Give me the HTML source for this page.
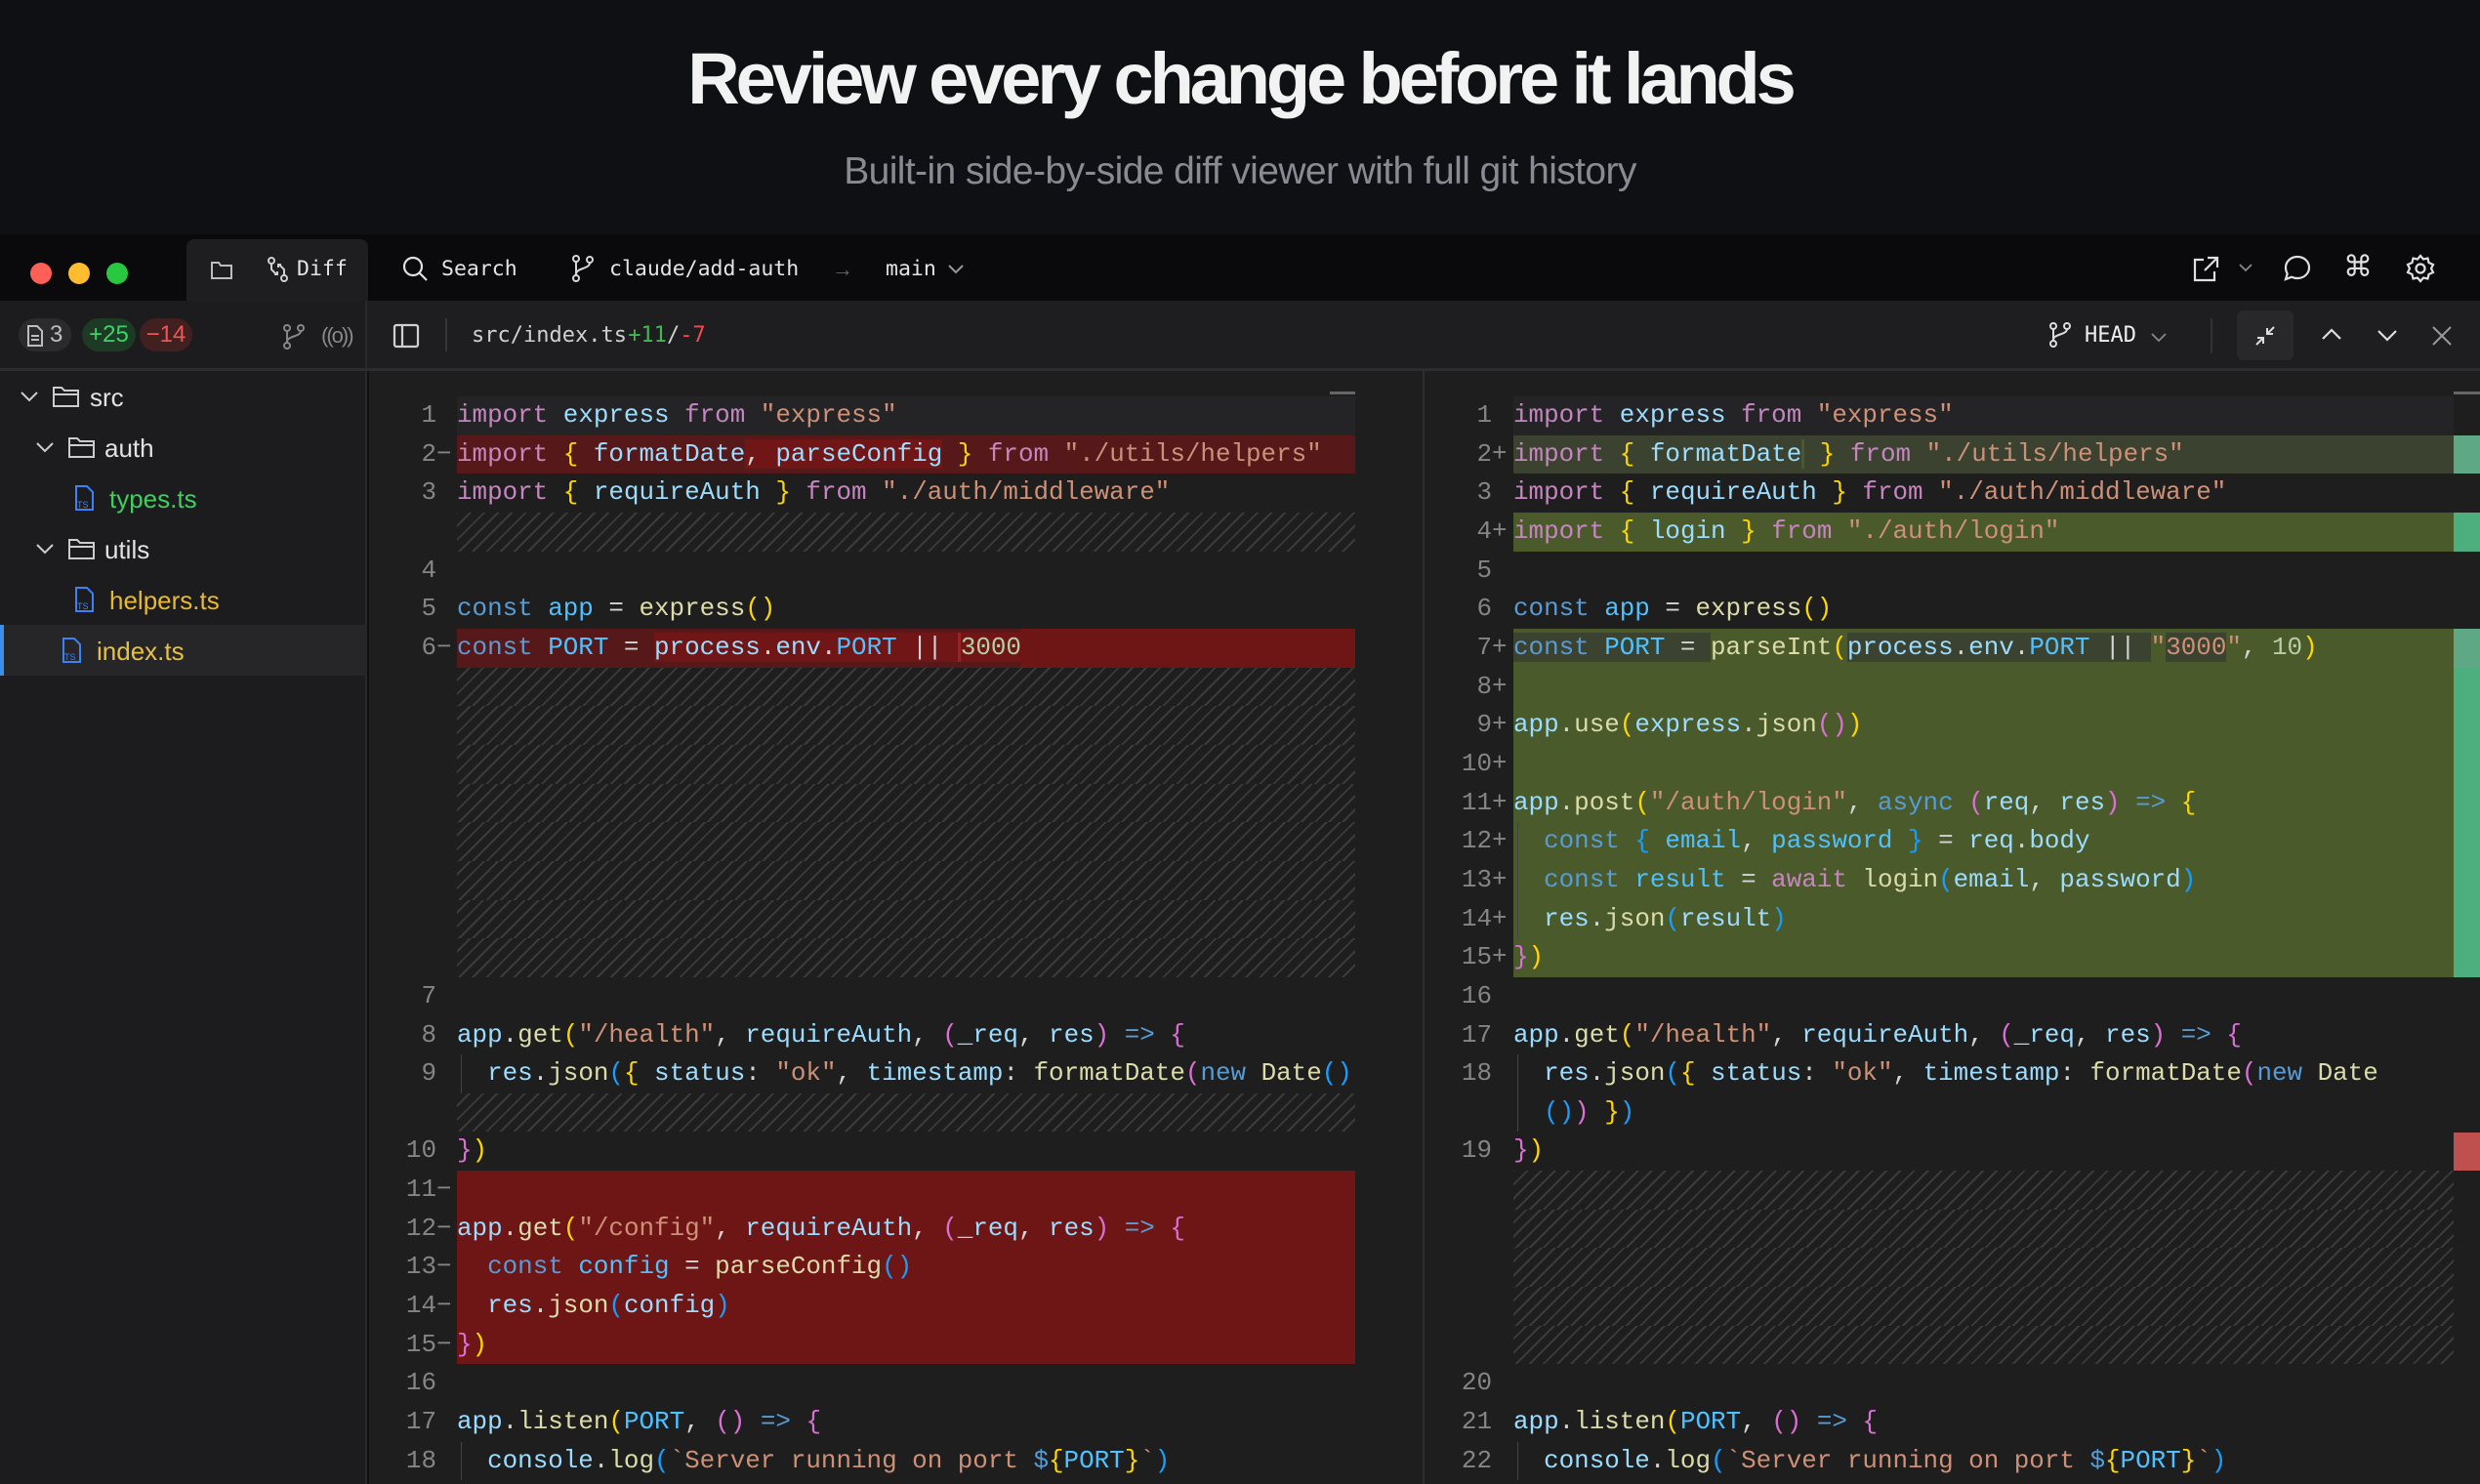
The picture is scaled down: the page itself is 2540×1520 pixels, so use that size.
<!DOCTYPE html>
<html><head><meta charset="utf-8">
<style>
*{margin:0;padding:0;box-sizing:border-box}
body{width:2540px;height:1520px;overflow:hidden;background:#0f1014;position:relative;font-family:"Liberation Sans",sans-serif}
.abs{position:absolute}
.title{position:absolute;left:0;width:2540px;top:44px;text-align:center;font-weight:bold;font-size:74px;line-height:74px;letter-spacing:-4.1px;color:#f2f2f2}
.sub{position:absolute;left:0;width:2540px;top:156px;text-align:center;font-size:39px;line-height:39px;color:#8a8a93;letter-spacing:-0.6px}
.tb{position:absolute;left:0;top:240px;width:2540px;height:68px;background:#0a0a0c}
.mono{font-family:"DejaVu Sans Mono","Liberation Mono",monospace}
.tbt{position:absolute;top:262px;font-size:21.5px;line-height:28px;color:#e4e4e4}
.side{position:absolute;left:0;top:308px;width:376px;height:1212px;background:#1c1c1f;border-right:2px solid #29292c}
.dh{position:absolute;left:376px;top:308px;width:2164px;height:71px;background:#1e1e21}
.hl{position:absolute;top:377px;left:0;width:2540px;height:3px;background:#2c2c2f}
.pill{position:absolute;top:326px;height:34px;border-radius:17px;font-size:24px;line-height:34px}
.tree{position:absolute;font-size:26px;line-height:52px;color:#e2e2e2;height:52px}
.main{position:absolute;left:378px;top:380px;width:2162px;height:1140px;background:#1e1e1e}
.pane{position:absolute;top:406px}
.row{position:relative;height:39.66px}
.ln{position:absolute;top:0;text-align:right;color:#858585}
.mk{position:absolute;top:0;color:#858585}
.code{position:absolute;top:0;height:39.66px;white-space:pre;color:#d4d4d4;overflow:hidden}
.pane,.row{font-family:"Liberation Mono",monospace;font-size:25.9px;line-height:39.66px}
.L .ln{left:0;width:71px}.L .mk{left:71px;width:21px}.L .code{left:92px;width:920px}
.R .ln{left:0;width:70px}.R .mk{left:70px;width:22px}.R .code{left:92px;width:963px}
.cur{background:#242426}
.hatch{background:repeating-linear-gradient(-45deg,#1e1e1e 0 8px,#3b3b3d 8px 10px)}
.rb{background:#561818}.rx{background:#6e1515}.rs{background:#711616}
.gb{background:#3b4230}.gx{background:#4b5a2a}.gs{background:#4b5a2a}
.ig{position:absolute;left:4px;top:0;width:1px;height:39.66px;background:#444}
.k{color:#c586c0}.kw{color:#569cd6}.v{color:#9cdcfe}.c{color:#4fc1ff}.f{color:#dcdcaa}.s{color:#ce9178}.n{color:#b5cea8}
.b1{color:#ffd700}.b2{color:#da70d6}.b3{color:#179fff}
.mm{position:absolute;left:2513px;width:27px;height:39.66px}
</style></head><body>
<div class="title">Review every change before it lands</div>
<div class="sub">Built-in side-by-side diff viewer with full git history</div>

<div class="tb"></div>
<svg class="abs" style="left:0;top:240px" width="160" height="68"><circle cx="42" cy="40" r="11" fill="#fe5f57"/><circle cx="81" cy="40" r="11" fill="#febc2e"/><circle cx="120" cy="40" r="11" fill="#28c840"/></svg>
<div class="abs" style="left:191px;top:245px;width:186px;height:66px;background:#1e1e21;border-radius:8px 8px 0 0"></div>
<svg class="abs" style="left:214px;top:264px" width="26" height="24" fill="none" stroke="#bdbdbd" stroke-width="2"><path d="M3 5h7l2 3h11v13H3z"/></svg>
<svg class="abs" style="left:272px;top:262px" width="26" height="28" fill="none" stroke="#d0d0d0" stroke-width="2"><circle cx="6" cy="5" r="3"/><circle cx="19" cy="23" r="3"/><path d="M6 8v6l5 5M19 20v-6l-5-5M9 19h3v-3M16 9h-3v3"/></svg>
<div class="tbt mono" style="left:304px">Diff</div>
<svg class="abs" style="left:410px;top:261px" width="30" height="30" fill="none" stroke="#e0e0e0" stroke-width="2.2"><circle cx="13" cy="12" r="9"/><path d="M20 19l7 7"/></svg>
<div class="tbt mono" style="left:452px">Search</div>
<svg class="abs" style="left:584px;top:260px" width="26" height="30" fill="none" stroke="#d8d8d8" stroke-width="2"><circle cx="6" cy="5" r="3"/><circle cx="6" cy="25" r="3"/><circle cx="20" cy="6" r="3"/><path d="M6 8v14M20 9c0 7-14 5-14 12"/></svg>
<div class="tbt mono" style="left:624px">claude/add-auth</div>
<div class="tbt" style="left:852px;color:#666;font-size:22px">→</div>
<div class="tbt mono" style="left:907px">main</div>
<svg class="abs" style="left:970px;top:268px" width="18" height="14" fill="none" stroke="#999" stroke-width="2"><path d="M2 4l7 7 7-7"/></svg>

<svg class="abs" style="left:2244px;top:260px" width="30" height="30" fill="none" stroke="#e0e0e0" stroke-width="2.2"><path d="M13 6H4v21h20v-9M17 4h10v10M27 4L14 17"/></svg>
<svg class="abs" style="left:2292px;top:268px" width="16" height="12" fill="none" stroke="#888" stroke-width="1.8"><path d="M2 3l6 6 6-6"/></svg>
<svg class="abs" style="left:2337px;top:259px" width="32" height="32" fill="none" stroke="#e0e0e0" stroke-width="2.2"><path d="M16 4c7 0 12 5 12 11s-5 11-12 11c-2 0-4-.4-6-1.3L4 27l1.7-5.6C4.6 19.6 4 17.4 4 15 4 9 9 4 16 4z"/></svg>
<div class="abs" style="left:2400px;top:258px;font-size:30px;line-height:32px;color:#e0e0e0;font-family:'DejaVu Sans',sans-serif">⌘</div>
<svg class="abs" style="left:2463px;top:259px" width="32" height="32" fill="none" stroke="#e0e0e0" stroke-width="2.2"><circle cx="16" cy="16" r="4.5"/><path d="M16 3l3 3.5 4.5-1 1 4.5L29 12l-2 4 2 4-4.5 2-1 4.5-4.5-1L16 29l-3-3.5-4.5 1-1-4.5L3 20l2-4-2-4 4.5-2 1-4.5 4.5 1z"/></svg>

<div class="side"></div>
<div class="dh"></div>
<div class="hl"></div>
<div class="pill" style="left:19px;width:54px;background:#2b2b2e;color:#bdbdbd;padding-left:32px">3</div>
<svg class="abs" style="left:27px;top:333px" width="18" height="22" fill="none" stroke="#bdbdbd" stroke-width="2"><path d="M2 1h9l5 5v15H2z M5 11h8M5 15h8"/></svg>
<div class="pill" style="left:84px;width:55px;background:#1d3a25;color:#3fd068;text-align:center">+25</div>
<div class="pill" style="left:143px;width:54px;background:#41201f;color:#f05656;text-align:center">−14</div>
<svg class="abs" style="left:289px;top:332px" width="24" height="26" fill="none" stroke="#888" stroke-width="2"><circle cx="5" cy="4" r="3"/><circle cx="5" cy="22" r="3"/><circle cx="19" cy="4" r="3"/><path d="M5 7v12M19 7c0 6-14 5-14 11"/></svg>
<div class="abs" style="left:329px;top:329px;font-size:22px;line-height:30px;color:#888;letter-spacing:-2px">((o))</div>

<svg class="abs" style="left:402px;top:331px" width="28" height="26" fill="none" stroke="#d0d0d0" stroke-width="2.2"><rect x="2" y="2" width="24" height="22" rx="2"/><path d="M10 2v22"/></svg>
<div class="abs" style="left:456px;top:326px;width:2px;height:34px;background:#363638"></div>
<div class="abs mono" style="left:483px;top:329px;font-size:22px;line-height:30px;color:#d0d0d0">src/index.ts <span style="color:#3fb950;margin-left:-12px">+11</span>/<span style="color:#f14c4c">-7</span></div>
<svg class="abs" style="left:2098px;top:330px" width="24" height="26" fill="none" stroke="#ddd" stroke-width="2"><circle cx="5" cy="4" r="3"/><circle cx="5" cy="22" r="3"/><circle cx="19" cy="4" r="3"/><path d="M5 7v12M19 7c0 6-14 5-14 11"/></svg>
<div class="abs mono" style="left:2135px;top:329px;font-size:22px;line-height:30px;color:#eee">HEAD</div>
<svg class="abs" style="left:2202px;top:339px" width="18" height="12" fill="none" stroke="#888" stroke-width="1.8"><path d="M2 3l7 7 7-7"/></svg>
<div class="abs" style="left:2264px;top:326px;width:2px;height:36px;background:#333"></div>
<div class="abs" style="left:2291px;top:318px;width:58px;height:51px;background:#28282b;border-radius:6px"></div>
<svg class="abs" style="left:2308px;top:332px" width="24" height="24" fill="none" stroke="#ddd" stroke-width="2"><path d="M3 21l7-7M4 14h6v6M21 3l-7 7M14 4v6h6"/></svg>
<svg class="abs" style="left:2376px;top:334px" width="24" height="16" fill="none" stroke="#ddd" stroke-width="2.2"><path d="M3 13l9-9 9 9"/></svg>
<svg class="abs" style="left:2433px;top:336px" width="24" height="16" fill="none" stroke="#ddd" stroke-width="2.2"><path d="M3 3l9 9 9-9"/></svg>
<svg class="abs" style="left:2489px;top:332px" width="24" height="24" fill="none" stroke="#999" stroke-width="2"><path d="M3 3l18 18M21 3L3 21"/></svg>

<!-- tree -->
<svg class="abs" style="left:20px;top:398px" width="20" height="16" fill="none" stroke="#ccc" stroke-width="2"><path d="M2 4l8 8 8-8"/></svg>
<svg class="abs" style="left:53px;top:393px" width="30" height="26" fill="none" stroke="#ccc" stroke-width="2"><path d="M2 4h8l3 3h14v16H2z M2 11h25"/></svg>
<div class="tree" style="left:92px;top:381px">src</div>
<svg class="abs" style="left:36px;top:450px" width="20" height="16" fill="none" stroke="#ccc" stroke-width="2"><path d="M2 4l8 8 8-8"/></svg>
<svg class="abs" style="left:69px;top:445px" width="30" height="26" fill="none" stroke="#ccc" stroke-width="2"><path d="M2 4h8l3 3h14v16H2z M2 11h25"/></svg>
<div class="tree" style="left:107px;top:433px">auth</div>
<svg class="abs" style="left:75px;top:496px" width="24" height="28" fill="none" stroke="#3b82f6" stroke-width="2"><path d="M3 2h11l6 6v18H3z"/><text x="4" y="24" font-size="9" fill="#3b82f6" stroke="none" font-family="Liberation Sans">TS</text></svg>
<div class="tree" style="left:112px;top:485px;color:#3fcf5c">types.ts</div>
<svg class="abs" style="left:36px;top:554px" width="20" height="16" fill="none" stroke="#ccc" stroke-width="2"><path d="M2 4l8 8 8-8"/></svg>
<svg class="abs" style="left:69px;top:549px" width="30" height="26" fill="none" stroke="#ccc" stroke-width="2"><path d="M2 4h8l3 3h14v16H2z M2 11h25"/></svg>
<div class="tree" style="left:107px;top:537px">utils</div>
<svg class="abs" style="left:75px;top:600px" width="24" height="28" fill="none" stroke="#3b82f6" stroke-width="2"><path d="M3 2h11l6 6v18H3z"/><text x="4" y="24" font-size="9" fill="#3b82f6" stroke="none" font-family="Liberation Sans">TS</text></svg>
<div class="tree" style="left:112px;top:589px;color:#e8b930">helpers.ts</div>
<div class="abs" style="left:0;top:640px;width:376px;height:52px;background:#262629"></div>
<div class="abs" style="left:0;top:640px;width:4px;height:52px;background:#3b8eea"></div>
<svg class="abs" style="left:62px;top:652px" width="24" height="28" fill="none" stroke="#3b82f6" stroke-width="2"><path d="M3 2h11l6 6v18H3z"/><text x="4" y="24" font-size="9" fill="#3b82f6" stroke="none" font-family="Liberation Sans">TS</text></svg>
<div class="tree" style="left:99px;top:641px;color:#e8c040">index.ts</div>

<div class="main"></div>
<div class="abs" style="left:1457px;top:380px;width:2px;height:1140px;background:#2f2f31"></div>
<div class="abs" style="left:1362px;top:401px;width:26px;height:3px;background:#666"></div>
<div class="abs" style="left:2513px;top:401px;width:27px;height:3px;background:#666"></div>

<!-- LEFT PANE -->
<div class="pane L" style="left:376px;width:1012px">
<div class="row"><span class="ln">1</span><span class="mk"></span><span class="code cur"><span class="k">import</span> <span class="v">express</span> <span class="k">from</span> <span class="s">"express"</span></span></div>
<div class="row"><span class="ln">2</span><span class="mk">−</span><span class="code rb"><span class="k">import</span> <span class="b1">{</span> <span class="v">formatDate</span><span class="rs">, <span class="v">parseConfig</span></span> <span class="b1">}</span> <span class="k">from</span> <span class="s">"./utils/helpers"</span></span></div>
<div class="row"><span class="ln">3</span><span class="mk"></span><span class="code"><span class="k">import</span> <span class="b1">{</span> <span class="v">requireAuth</span> <span class="b1">}</span> <span class="k">from</span> <span class="s">"./auth/middleware"</span></span></div>
<div class="row"><span class="code hatch"></span></div>
<div class="row"><span class="ln">4</span><span class="code"></span></div>
<div class="row"><span class="ln">5</span><span class="code"><span class="kw">const</span> <span class="c">app</span> = <span class="f">express</span><span class="b1">()</span></span></div>
<div class="row"><span class="ln">6</span><span class="mk">−</span><span class="code rb"><span class="kw">const</span> <span class="c">PORT</span> = <span class="rs"><span class="v">process</span>.<span class="v">env</span>.<span class="c">PORT</span> || </span><span class="rs" style="border-left:3px solid #a02020"><span class="n">3000</span></span><span class="rx" style="display:inline-block;width:400px">&nbsp;</span></span></div>
<div class="row"><span class="code hatch"></span></div>
<div class="row"><span class="code hatch"></span></div>
<div class="row"><span class="code hatch"></span></div>
<div class="row"><span class="code hatch"></span></div>
<div class="row"><span class="code hatch"></span></div>
<div class="row"><span class="code hatch"></span></div>
<div class="row"><span class="code hatch"></span></div>
<div class="row"><span class="code hatch"></span></div>
<div class="row"><span class="ln">7</span><span class="code"></span></div>
<div class="row"><span class="ln">8</span><span class="code"><span class="v">app</span>.<span class="f">get</span><span class="b1">(</span><span class="s">"/health"</span>, <span class="v">requireAuth</span>, <span class="b2">(</span><span class="v">_req</span>, <span class="v">res</span><span class="b2">)</span> <span class="kw">=&gt;</span> <span class="b2">{</span></span></div>
<div class="row"><span class="ln">9</span><span class="code"><span class="ig"></span>  <span class="v">res</span>.<span class="f">json</span><span class="b3">(</span><span class="b1">{</span> <span class="v">status</span>: <span class="s">"ok"</span>, <span class="v">timestamp</span>: <span class="f">formatDate</span><span class="b2">(</span><span class="kw">new</span> <span class="f">Date</span><span class="b3">()</span></span></div>
<div class="row"><span class="code hatch"></span></div>
<div class="row"><span class="ln">10</span><span class="code"><span class="b2">}</span><span class="b1">)</span></span></div>
<div class="row"><span class="ln">11</span><span class="mk">−</span><span class="code rx"></span></div>
<div class="row"><span class="ln">12</span><span class="mk">−</span><span class="code rx"><span class="v">app</span>.<span class="f">get</span><span class="b1">(</span><span class="s">"/config"</span>, <span class="v">requireAuth</span>, <span class="b2">(</span><span class="v">_req</span>, <span class="v">res</span><span class="b2">)</span> <span class="kw">=&gt;</span> <span class="b2">{</span></span></div>
<div class="row"><span class="ln">13</span><span class="mk">−</span><span class="code rx">  <span class="kw">const</span> <span class="c">config</span> = <span class="f">parseConfig</span><span class="b3">()</span></span></div>
<div class="row"><span class="ln">14</span><span class="mk">−</span><span class="code rx">  <span class="v">res</span>.<span class="f">json</span><span class="b3">(</span><span class="v">config</span><span class="b3">)</span></span></div>
<div class="row"><span class="ln">15</span><span class="mk">−</span><span class="code rx"><span class="b2">}</span><span class="b1">)</span></span></div>
<div class="row"><span class="ln">16</span><span class="code"></span></div>
<div class="row"><span class="ln">17</span><span class="code"><span class="v">app</span>.<span class="f">listen</span><span class="b1">(</span><span class="c">PORT</span>, <span class="b2">()</span> <span class="kw">=&gt;</span> <span class="b2">{</span></span></div>
<div class="row"><span class="ln">18</span><span class="code"><span class="ig"></span>  <span class="v">console</span>.<span class="f">log</span><span class="b3">(</span><span class="s">`Server running on port </span><span class="kw">$</span><span class="b1">{</span><span class="c">PORT</span><span class="b1">}</span><span class="s">`</span><span class="b3">)</span></span></div>
</div>

<!-- RIGHT PANE -->
<div class="pane R" style="left:1458px;width:1055px">
<div class="row"><span class="ln">1</span><span class="code cur"><span class="k">import</span> <span class="v">express</span> <span class="k">from</span> <span class="s">"express"</span></span></div>
<div class="row"><span class="ln">2</span><span class="mk">+</span><span class="code gb"><span class="k">import</span> <span class="b1">{</span> <span class="v">formatDate</span><span style="border-left:3px solid #4b5a2a"></span> <span class="b1">}</span> <span class="k">from</span> <span class="s">"./utils/helpers"</span></span></div>
<div class="row"><span class="ln">3</span><span class="code"><span class="k">import</span> <span class="b1">{</span> <span class="v">requireAuth</span> <span class="b1">}</span> <span class="k">from</span> <span class="s">"./auth/middleware"</span></span></div>
<div class="row"><span class="ln">4</span><span class="mk">+</span><span class="code gx"><span class="k">import</span> <span class="b1">{</span> <span class="v">login</span> <span class="b1">}</span> <span class="k">from</span> <span class="s">"./auth/login"</span></span></div>
<div class="row"><span class="ln">5</span><span class="code"></span></div>
<div class="row"><span class="ln">6</span><span class="code"><span class="kw">const</span> <span class="c">app</span> = <span class="f">express</span><span class="b1">()</span></span></div>
<div class="row"><span class="ln">7</span><span class="mk">+</span><span class="code gx"><span class="gb"><span class="kw">const</span> <span class="c">PORT</span> = </span><span class="f">parseInt</span><span class="b1">(</span><span class="gb"><span class="v">process</span>.<span class="v">env</span>.<span class="c">PORT</span> || </span><span class="s">"</span><span class="gb"><span class="s">3000</span></span><span class="s">"</span>, <span class="n">10</span><span class="b1">)</span></span></div>
<div class="row"><span class="ln">8</span><span class="mk">+</span><span class="code gx"></span></div>
<div class="row"><span class="ln">9</span><span class="mk">+</span><span class="code gx"><span class="v">app</span>.<span class="f">use</span><span class="b1">(</span><span class="v">express</span>.<span class="f">json</span><span class="b2">()</span><span class="b1">)</span></span></div>
<div class="row"><span class="ln">10</span><span class="mk">+</span><span class="code gx"></span></div>
<div class="row"><span class="ln">11</span><span class="mk">+</span><span class="code gx"><span class="v">app</span>.<span class="f">post</span><span class="b1">(</span><span class="s">"/auth/login"</span>, <span class="kw">async</span> <span class="b2">(</span><span class="v">req</span>, <span class="v">res</span><span class="b2">)</span> <span class="kw">=&gt;</span> <span class="b1">{</span></span></div>
<div class="row"><span class="ln">12</span><span class="mk">+</span><span class="code gx"><span class="ig"></span>  <span class="kw">const</span> <span class="b3">{</span> <span class="c">email</span>, <span class="c">password</span> <span class="b3">}</span> = <span class="v">req</span>.<span class="v">body</span></span></div>
<div class="row"><span class="ln">13</span><span class="mk">+</span><span class="code gx"><span class="ig"></span>  <span class="kw">const</span> <span class="c">result</span> = <span class="k">await</span> <span class="f">login</span><span class="b3">(</span><span class="v">email</span>, <span class="v">password</span><span class="b3">)</span></span></div>
<div class="row"><span class="ln">14</span><span class="mk">+</span><span class="code gx"><span class="ig"></span>  <span class="v">res</span>.<span class="f">json</span><span class="b3">(</span><span class="v">result</span><span class="b3">)</span></span></div>
<div class="row"><span class="ln">15</span><span class="mk">+</span><span class="code gx"><span class="b2">}</span><span class="b1">)</span></span></div>
<div class="row"><span class="ln">16</span><span class="code"></span></div>
<div class="row"><span class="ln">17</span><span class="code"><span class="v">app</span>.<span class="f">get</span><span class="b1">(</span><span class="s">"/health"</span>, <span class="v">requireAuth</span>, <span class="b2">(</span><span class="v">_req</span>, <span class="v">res</span><span class="b2">)</span> <span class="kw">=&gt;</span> <span class="b2">{</span></span></div>
<div class="row"><span class="ln">18</span><span class="code"><span class="ig"></span>  <span class="v">res</span>.<span class="f">json</span><span class="b3">(</span><span class="b1">{</span> <span class="v">status</span>: <span class="s">"ok"</span>, <span class="v">timestamp</span>: <span class="f">formatDate</span><span class="b2">(</span><span class="kw">new</span> <span class="f">Date</span></span></div>
<div class="row"><span class="code"><span class="ig"></span>  <span class="b3">()</span><span class="b2">)</span> <span class="b1">}</span><span class="b3">)</span></span></div>
<div class="row"><span class="ln">19</span><span class="code"><span class="b2">}</span><span class="b1">)</span></span></div>
<div class="row"><span class="code hatch"></span></div>
<div class="row"><span class="code hatch"></span></div>
<div class="row"><span class="code hatch"></span></div>
<div class="row"><span class="code hatch"></span></div>
<div class="row"><span class="code hatch"></span></div>
<div class="row"><span class="ln">20</span><span class="code"></span></div>
<div class="row"><span class="ln">21</span><span class="code"><span class="v">app</span>.<span class="f">listen</span><span class="b1">(</span><span class="c">PORT</span>, <span class="b2">()</span> <span class="kw">=&gt;</span> <span class="b2">{</span></span></div>
<div class="row"><span class="ln">22</span><span class="code"><span class="ig"></span>  <span class="v">console</span>.<span class="f">log</span><span class="b3">(</span><span class="s">`Server running on port </span><span class="kw">$</span><span class="b1">{</span><span class="c">PORT</span><span class="b1">}</span><span class="s">`</span><span class="b3">)</span></span></div>
</div>

<!-- minimap markers -->
<div class="mm" style="top:445.66px;background:#5fa885"></div>
<div class="mm" style="top:524.98px;background:#4caf7d"></div>
<div class="mm" style="top:643.96px;background:#5fa885"></div>
<div class="mm" style="top:683.62px;height:317.28px;background:#4caf7d"></div>
<div class="mm" style="top:1159.54px;background:#c0504d"></div>
</body></html>
